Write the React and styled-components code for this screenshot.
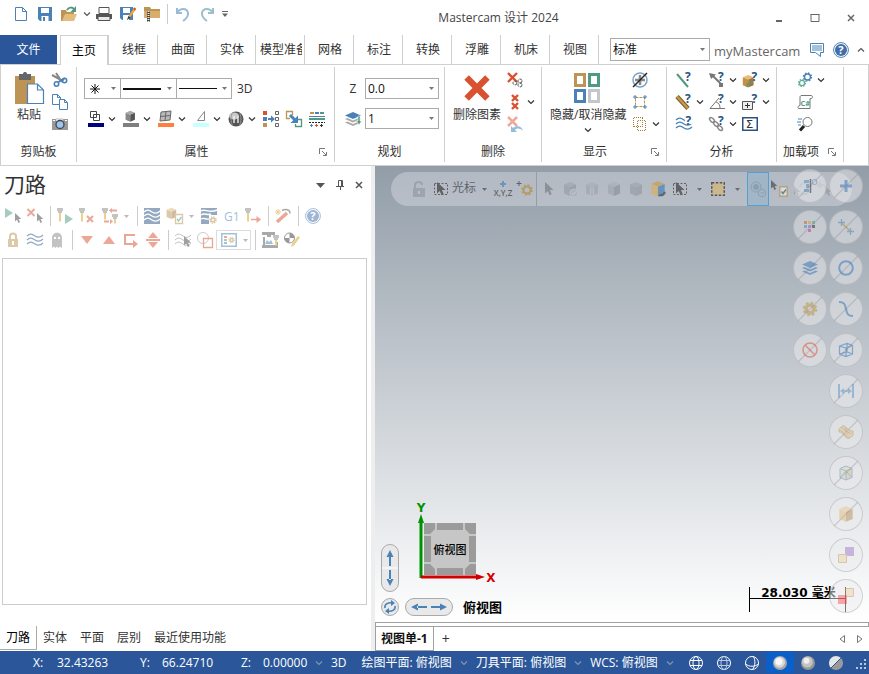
import React, { useState } from "react";
import styled, { createGlobalStyle, css } from "styled-components";

const GlobalStyle = createGlobalStyle`
  * {
    box-sizing: border-box;
  }

  body {
    margin: 0;
    background: #fff;
    color: #333;
    font-family: "Open Sans", "Noto Sans CJK SC", sans-serif;
    font-size: 12px;
    line-height: 16px;
  }

  button,
  select {
    font: inherit;
    color: inherit;
    border: 0;
    padding: 0;
    margin: 0;
    background: transparent;
  }
`;

const BLUE = "#4a82b8";
const NAVY = "#2b5580";
const RED = "#d9512f";
const GOLD = "#bd9454";
const GREEN = "#4f9a80";
const GREY = "#777";

// ---------- Drawing helpers ----------

const Gear = ({ cx, cy, r, color, width = 2 }) => {
  const dash = (Math.PI * r) / 8;
  return (
    <g fill="none" stroke={color}>
      <circle cx={cx} cy={cy} r={r} strokeWidth={width} strokeDasharray={`${dash} ${dash}`} />
      <circle cx={cx} cy={cy} r={r - width / 2 - 0.3} strokeWidth={width} />
    </g>
  );
};

const Cursor = ({ x, y, s = 1, color = "#444" }) => (
  <path
    transform={`translate(${x} ${y}) scale(${s})`}
    d="M0 0v9.5L2.3 7.4 3.8 11l1.8-.8L4.100 6.700h3z"
    fill={color}
  />
);

const Cube = ({ x = 0, y = 0, s = 1, top, left, right }) => (
  <g transform={`translate(${x} ${y}) scale(${s})`}>
    <path d="M8 1l6 2.500-6 2.500L2 3.500z" fill={top} />
    <path d="M2 3.500L8 6v9l-6-2.500z" fill={left} />
    <path d="M14 3.500L8 6v9l6-2.500z" fill={right} />
  </g>
);

const Mill = ({ x = 0, y = 0, h = 14 }) => (
  <g transform={`translate(${x} ${y})`}>
    <path d="M0 0h6v3H5v2H1V3H0z" fill="#888" />
    <path d={`M2 5h2v${h - 6}l-1 1-1-1z`} fill="#d9a520" />
  </g>
);

const Question = ({ x = 9, y = 9 }) => (
  <text x={x} y={y} fontSize="12" fontWeight="700" fill={NAVY} fontFamily="Open Sans">
    ?
  </text>
);

const Cross = ({ x, y, s, w = 2, color = RED }) => (
  <path d={`M${x} ${y}l${s} ${s}m0 ${-s}l${-s} ${s}`} stroke={color} strokeWidth={w} fill="none" />
);

const Waves = ({ color, w = 1.2 }) => (
  <path
    d="M0 4c3-3 5-2 8 0s5 2 8-1M0 8c3-3 5-2 8 0s5 2 8-1M0 12c3-3 5-2 8 0s5 2 8-1"
    stroke={color}
    strokeWidth={w}
    fill="none"
  />
);

const Layers = ({ top, rest }) => (
  <g>
    <path d="M8 1l8 3.500L8 8 0 4.500z" fill={top} />
    <path d="M0 8l2.500-1L8 9.500 13.500 7 16 8l-8 3.500z" fill={rest} />
    <path d="M0 11.500l2.500-1L8 13l5.500-2.500 2.500 1L8 15z" fill={rest} />
  </g>
);

const MiniText = ({ x, y, size, color = "#333", weight = 400, children }) => (
  <text x={x} y={y} fontSize={size} fontWeight={weight} fill={color} fontFamily="Open Sans">
    {children}
  </text>
);

const swatchBar = (color) => <path d="M0 12h16v4H0z" fill={color} stroke="none" />;

// ---------- Icons, all on a 16 x 16 grid ----------

const ICONS = {
  newFile: <path d="M2.500 1.500h7l4 4v9h-11zM9.500 1.500v4h4" fill="#fff" stroke={BLUE} />,
  save: (
    <g>
      <path d="M1 1h14v14H3l-2-2z" fill={BLUE} />
      <path d="M4 2h8v5H4zM4.500 10h7v5h-7z" fill="#fff" />
      <path d="M6 11h2v4H6z" fill={BLUE} />
    </g>
  ),
  open: (
    <g>
      <path d="M0 4h5l1 2h7v3H5l-3 6H0z" fill={GOLD} />
      <path d="M4 8h12l-3 7H1z" fill="#e3bd7d" />
      <path d="M6 4c2-3 5-3 7-1" stroke={GREEN} strokeWidth="2" fill="none" />
      <path d="M15 0v6H9.500z" fill={GREEN} />
    </g>
  ),
  print: (
    <g>
      <path d="M3 1.500h10v6H3z" fill="#fff" stroke="#555" />
      <path d="M0 8h16v5H0z" fill="#555" />
      <path d="M2 10.500h12v4H2z" fill="#e8e8e8" stroke="#555" />
    </g>
  ),
  saveAs: (
    <g>
      <path d="M0 1h13v13H2l-2-2z" fill={BLUE} />
      <path d="M3 2h7v5H3zM3 9h6v5H3z" fill="#fff" />
      <path d="M7 14l1.500-4L14 2l2 1.500-6 8z" fill="#f0a83c" />
      <path d="M7 14l1.500-4 2 1.500z" fill="#333" />
      <path d="M13 3l1.200-1.800 2 1.500L15 4.500z" fill={RED} />
    </g>
  ),
  zip: (
    <g>
      <path d="M0 1h6l1 2h9v9H0z" fill={GOLD} />
      <path d="M0 5h16v7H0z" fill="#d9ae6a" />
      <path d="M4.500 5v11" stroke="#444" strokeWidth="3" />
      <path d="M4.500 5v11" stroke="#eee" strokeWidth="2" strokeDasharray="1 1" />
    </g>
  ),
  undo: <path d="M2 2v5h5M2.500 6.500C5 2 12 1.500 13 7c.4 3-2 6-5 8" stroke="#9bbad9" strokeWidth="2" fill="none" />,
  redo: <path d="M14 2v5H9M13.500 6.500C11 2 4 1.500 3 7c-.4 3 2 6 5 8" stroke="#9bc0cc" strokeWidth="2" fill="none" />,
  comment: (
    <g fill="none" stroke={BLUE}>
      <path d="M1.500 1.500h13v9h-3v4l-5-4h-5z" fill="#fff" />
      <path d="M3 4h10M3 6h10M3 8h10" />
    </g>
  ),
  help: (
    <g>
      <circle cx="8" cy="8" r="7.400" fill="#fff" stroke={BLUE} />
      <circle cx="8" cy="8" r="6" fill="#426da8" />
      <text x="5.200" y="12" fontSize="11" fontWeight="700" fill="#fff" fontFamily="Open Sans">
        ?
      </text>
    </g>
  ),
  paste: (
    <g>
      <path d="M1 2h10v14H1z" fill={GOLD} />
      <path d="M3 1h2c0-1.300 2-1.300 2 0h2v3H3z" fill="#666" />
      <path d="M7.250 6h5l3 3v6.750h-8zM12.250 6v3h3" fill="#fff" stroke={BLUE} strokeWidth=".6" />
    </g>
  ),
  cut: (
    <g fill="none" strokeWidth="1.600">
      <path d="M4 1l6 9M0 3l11 6" stroke="#888" strokeWidth="2" />
      <path d="M10 9l3-3" stroke={BLUE} />
      <circle cx="4.500" cy="12" r="2.200" stroke={BLUE} />
      <circle cx="12.500" cy="8.500" r="2.200" stroke={BLUE} />
      <path d="M6 10.500l4-3" stroke={BLUE} />
    </g>
  ),
  copy: (
    <g fill="#fff" stroke={BLUE}>
      <path d="M.5.5h5l3 3v7h-8zM5.500.5v3h3" />
      <path d="M7.500 5.500h5l3 3v7h-8zM12.500 5.500v3h3" />
    </g>
  ),
  camera: (
    <g>
      <path d="M0 3h16v11H0z" fill="#999" />
      <path d="M4 2h7v3H4z" fill="#ddd" />
      <path d="M1 4h2v1H1zM13 4h2v1h-2z" fill="#fff" />
      <circle cx="8" cy="8.500" r="4" fill="#9cc6ec" stroke="#445" strokeWidth="1.300" />
    </g>
  ),
  pointStyle: <path d="M8 3v10M3 8h10M4.500 4.500l7 7M11.500 4.500l-7 7" stroke="#111" />,
  lineColor: (
    <g fill="none" stroke="#444">
      <path d="M2.500.5h6v6h-6zM5.500 3.500h6v6h-6z" />
      {swatchBar("#00007f")}
    </g>
  ),
  solidColor: (
    <g>
      <Cube x={1} y={-1} s={0.78} top="#aaa" left="#888" right="#555" />
      {swatchBar("#7f7f7f")}
    </g>
  ),
  surfaceColor: (
    <g>
      <path d="M3 1l10-1-1 9-10 1z" fill="#bbb" stroke="#666" />
      <path d="M8 .5L7 9.500M2.500 5.500l10-1" stroke="#666" />
      {swatchBar("#ff7f3f")}
    </g>
  ),
  wireColor: (
    <g>
      <path d="M11.500.5v9h-7z" fill="none" stroke="#888" />
      {swatchBar("#c8ffff")}
    </g>
  ),
  globe: (
    <g>
      <circle cx="8" cy="8" r="7.500" fill="#555" />
      <ellipse cx="6" cy="5" rx="5" ry="3.500" fill="#c9c9c9" />
      <path d="M4.500 1.500c-2 4-2 9 0 13M11.500 1.500c2 4 2 9 0 13" stroke="#999" fill="none" />
      <path d="M5 5h2v7H5zM9 5h2v7H9z" fill="#eee" opacity=".7" />
    </g>
  ),
  setAll: (
    <g>
      <path d="M0 0h4v4H0z" fill={RED} />
      <path d="M0 6h4v4H0zM5 7h3V4.500L12 8l-4 3.500V9H5z" fill={BLUE} />
      <path d="M0 12h4v4H0z" fill={GOLD} />
      <path d="M12.500.5h3v3h-3zM12.500 6.500h3v3h-3zM12.500 12.500h3v3h-3z" fill="none" stroke="#666" />
    </g>
  ),
  setFrom: (
    <g fill="none">
      <path d="M4 7.500H.5v-7h6V4" stroke={GOLD} strokeWidth="1.300" />
      <path d="M12 8.500h3.500v7h-6V13" stroke={GREEN} strokeWidth="1.300" />
      <path d="M4 4l5 5" stroke={BLUE} strokeWidth="3" />
      <path d="M12 4.500V12H4.500z" fill={BLUE} />
    </g>
  ),
  lineTypes: (
    <g>
      <path d="M1 2h4" stroke={GOLD} strokeWidth="2" />
      <path d="M6 2h4" stroke={BLUE} strokeWidth="2" />
      <path d="M11 2h4" stroke={GREEN} strokeWidth="2" />
      <path d="M0 5.500h16" stroke={BLUE} />
      <path d="M0 8h16" stroke={GREEN} strokeWidth="2" />
      <path d="M0 11.500h16" stroke="#222" strokeDasharray="2 1" />
      <path d="M1 14.500h3M2.500 13v3" stroke={BLUE} />
      <path d="M6 14.500h3M7.500 13v3" stroke={RED} />
      <path d="M11 14.500h3M12.500 13v3" stroke="#333" />
    </g>
  ),
  levels: (
    <g>
      <Layers top={BLUE} rest="#aaa" />
      <path d="M13 5h2v5h1.500L14 14l-2.500-4H13z" fill={GREEN} stroke="#fff" strokeWidth=".5" />
    </g>
  ),
  bigDelete: <path d="M2.800 2.800l10.400 10.400M13.200 2.800L2.800 13.200" stroke={RED} strokeWidth="3.200" />,
  deleteLink: (
    <g fill="none">
      <Cross x={1} y={1} s={9} w={2.400} />
      <circle cx="8" cy="11" r="2" stroke="#555" strokeDasharray="3 1" />
      <circle cx="13" cy="13" r="2" stroke="#555" strokeDasharray="3 1" />
      <circle cx="13" cy="9" r="2" stroke="#555" strokeDasharray="3 1" />
    </g>
  ),
  deleteDup: (
    <g>
      <Cross x={5} y={1} s={6} w={2.400} />
      <Cross x={5} y={9} s={6} w={2.400} />
    </g>
  ),
  undelete: (
    <g>
      <Cross x={1} y={1} s={9} w={2.600} color="#f0a999" />
      <path d="M4 10v6h6L8 14c2-2 5-2 8 1-1-5-6-6-10-3z" fill="#94bddb" />
    </g>
  ),
  hideShow: (
    <g fill="#fff" strokeWidth="1.500">
      <path d="M1.750 1.250h4.500v5.500h-4.500z" stroke={GOLD} />
      <path d="M8.750 1.250h4.500v5.500h-4.500z" stroke={GREEN} />
      <path d="M1.750 9.250h4.500v5.500h-4.500z" stroke={BLUE} />
      <path d="M8.750 9.250h4.500v5.500h-4.500z" stroke="#c3c7cc" />
    </g>
  ),
  noPoints: (
    <g fill="none">
      <circle cx="8" cy="8" r="7" stroke="#7aa3c6" strokeWidth="1.500" />
      <path d="M8 3v10M3 8h10" stroke="#888" strokeWidth="2.500" />
      <path d="M1 15L15 1" stroke="#222" strokeWidth="1.400" />
    </g>
  ),
  endpoints: (
    <g fill="none">
      <path d="M3.500 3.500h9v9h-9z" stroke={GOLD} strokeDasharray="3 1" />
      <path d="M3 1v4M1 3h4M13 1v4M11 3h4M3 11v4M1 13h4M13 11v4M11 13h4" stroke={BLUE} />
    </g>
  ),
  hideBox: (
    <g fill="none" stroke="#a87b30" strokeDasharray="1 1" shapeRendering="crispEdges">
      <path d="M1.500 1.500h9M1.500 10.500h9M1.500 1.500v9M10.500 1.500v9" />
      <path d="M5.500 4.500h8M5.500 14.500h8M5.500 4.500v10M13.500 4.500v10" />
    </g>
  ),
  anEntity: (
    <g>
      <path d="M1 2l11 13" stroke={GREEN} strokeWidth="2" />
      <Question />
    </g>
  ),
  anDistance: (
    <g>
      <path d="M1 2.500l11 12" stroke="#7a5a28" strokeWidth="4.500" />
      <path d="M1 2.500l11 12" stroke="#c49a50" strokeWidth="2.500" />
      <Question />
    </g>
  ),
  anArea: (
    <g>
      <Waves color={BLUE} w={1.300} />
      <path d="M9 0h7v8H9z" fill="#fff" />
      <Question x={9.500} />
    </g>
  ),
  anDynamic: (
    <g>
      <path d="M3 3l10 10" stroke={GREY} strokeWidth="2" />
      <path d="M0 1l7 1.500L2 7z" fill={GREY} />
      <path d="M10 11h4v4h-4z" fill={GREY} />
      <Question />
    </g>
  ),
  anAngle: (
    <g fill="none" stroke={GREY}>
      <path d="M10 4L1 14.500h15M7 8c3 1 4 3 4 6" />
      <g stroke="none">
        <Question />
      </g>
    </g>
  ),
  anChain: (
    <g>
      <g fill="none" stroke="#888" strokeWidth="1.500">
        <ellipse cx="3" cy="4" rx="3" ry="1.700" transform="rotate(45 3 4)" />
        <ellipse cx="7" cy="8" rx="3" ry="1.700" transform="rotate(45 7 8)" />
        <ellipse cx="11" cy="12" rx="3" ry="1.700" transform="rotate(45 11 12)" />
      </g>
      <Question />
    </g>
  ),
  anSolid: (
    <g>
      <Cube x={-1} y={2} s={0.9} top="#e7bd77" left="#c98f40" right="#a9763a" />
      <path d="M5 15c0-4 3-5 6-5" stroke={GREEN} fill="none" strokeWidth="1.500" />
      <Question x={9.500} />
    </g>
  ),
  anAdd: (
    <g>
      <path d="M.5 7.500h10v8H.5z" fill="#eee" stroke="#555" />
      <path d="M5.500 9v5M3 11.500h5" stroke="#333" />
      <Question x={9.500} />
    </g>
  ),
  anSum: (
    <g>
      <path d="M.75 1.750h14.500v12.500H.75z" fill="#fff" stroke={NAVY} strokeWidth="1.500" />
      <MiniText x="4.500" y="12" size="11" weight="600">
        Σ
      </MiniText>
    </g>
  ),
  gears: (
    <g>
      <Gear cx={10.5} cy={5} r={4} color={BLUE} width={1.400} />
      <Gear cx={5} cy={11} r={3.500} color="#5fae96" width={1.300} />
    </g>
  ),
  script: (
    <g>
      <path d="M4 1.500h10c2 0 2 3 0 3h-1v10H2c-2 0-1-3 1-3V3c0-1 1-1.500 2-1.500" fill="#fff" stroke={GREY} />
      <MiniText x="3.500" y="11.500" size="7.500" color={GREEN} weight="700">
        C#
      </MiniText>
    </g>
  ),
  search: (
    <g fill="none">
      <path d="M1 3h4M0 6h4M1 9h3" stroke={BLUE} />
      <circle cx="10.500" cy="6" r="4.500" stroke="#777" />
      <path d="M7 10l-4 4.500" stroke="#222" strokeWidth="3" />
    </g>
  ),
  selAll: (
    <g>
      <path d="M0 0l8 5-8 5z" fill={GREEN} />
      <Cursor x={10} y={5} s={0.9} />
    </g>
  ),
  selNone: (
    <g>
      <Cross x={0.5} y={1} s={7} w={1.800} />
      <Cursor x={10} y={5} s={0.9} />
    </g>
  ),
  regenAll: (
    <g>
      <Mill x={0} y={0} />
      <path d="M8 6l8 5-8 5z" fill={GREEN} />
    </g>
  ),
  regenBad: (
    <g>
      <Mill x={0} y={0} />
      <Cross x={8} y={8} s={6} />
    </g>
  ),
  transformOp: (
    <g>
      <Mill x={0} y={0} h={12} />
      <Mill x={10} y={6} h={10} />
      <path d="M8 2.500h7M2 13.500h5" stroke={RED} strokeWidth="2" />
      <path d="M7 2.500L10 0v5zM11 13.500L8 11v5z" fill={RED} />
    </g>
  ),
  backplot: (
    <g>
      <path d="M0 0h16v16H0z" fill={NAVY} />
      <Waves color="#fff" w={1.300} />
    </g>
  ),
  verify: (
    <g>
      <Cube x={-2} y={-1} s={0.8} top="#e0b878" left={GOLD} right="#a07c44" />
      <path d="M8.500 6.500h7v9h-7z" fill="#fff" stroke={GOLD} strokeWidth="1.300" />
      <path d="M10 11l1.500 2 3-4" fill="none" stroke={GREEN} strokeWidth="1.500" />
    </g>
  ),
  simulate: (
    <g>
      <path d="M0 0h16v7H8v9H0z" fill={NAVY} />
      <path d="M0 3c4-3 8 3 16-1M0 7c4-3 6 1 10-1M0 11c3-2 5 1 8 0" stroke="#fff" fill="none" strokeWidth="1.400" />
      <Gear cx={12} cy={12} r={3} color={GOLD} width={1.600} />
    </g>
  ),
  g1: (
    <MiniText x="1" y="12.500" size="12" color={BLUE}>
      G1
    </MiniText>
  ),
  highfeed: (
    <g>
      <Mill x={0} y={0} />
      <path d="M6 11.500h6" stroke={RED} strokeWidth="1.500" />
      <path d="M16 11.500L11.500 8v7z" fill={RED} />
    </g>
  ),
  wand: (
    <g>
      <path d="M2 14L12 5" stroke={RED} strokeWidth="3.500" />
      <path d="M7 2.500c4-2 8-1 8 3" stroke="#555" fill="none" strokeWidth="1.500" />
      <path d="M3 1v6M0 4h6M1 2l4 4M5 2L1 6" stroke="#e0a030" />
    </g>
  ),
  lock: (
    <g>
      <path d="M3 7h10v8H3z" fill={GOLD} />
      <path d="M5 7V4c0-3.500 6-3.500 6 0v3" fill="none" stroke={GOLD} strokeWidth="2" />
      <path d="M8 9v4" stroke="#fff" strokeWidth="2" />
    </g>
  ),
  waves: <Waves color={NAVY} />,
  ghost: (
    <g>
      <path d="M3 16V6c0-7 10-7 10 0v10l-2-1.500L9.500 16 8 14.500 6.500 16 5 14.500z" fill="#888" />
      <path d="M5 5h2v2H5zM9 5h2v2H9z" fill="#fff" />
    </g>
  ),
  down: <path d="M2 4h12L8 12z" fill={RED} />,
  up: <path d="M2 12h12L8 4z" fill={RED} />,
  insertArrow: (
    <g>
      <path d="M12 3H2v9h9" stroke={RED} strokeWidth="2" fill="none" />
      <path d="M10 8l5 4-5 4z" fill={RED} />
    </g>
  ),
  scroll: <path d="M1 7h14v2H1zM3 6l5-6 5 6zM3 10l5 6 5-6z" fill={RED} />,
  pickPath: (
    <g>
      <Waves color="#888" w={1} />
      <Cursor x={9} y={4} />
    </g>
  ),
  overlap: (
    <g fill="none">
      <circle cx="6" cy="6" r="5.500" stroke="#999" />
      <path d="M6.500 6.500h9v9h-9z" stroke={RED} strokeWidth="1.300" />
    </g>
  ),
  display: (
    <g>
      <path d="M.75 1.750h14.500v12.500H.75z" fill="#fff" stroke={BLUE} strokeWidth="1.500" />
      <path d="M3 4h3v2H3z" fill={RED} />
      <path d="M3 7h3v2H3z" fill={GREEN} />
      <path d="M3 10h3v2H3z" fill={BLUE} />
      <Gear cx={10.500} cy={8} r={2.500} color={GOLD} width={1.400} />
    </g>
  ),
  machine: (
    <g>
      <path d="M0 0h13v3H9v2H5V3H0zM1 5h2v8h10v-3h3v6H0v-3h1z" fill="#555" />
      <path d="M3 12l2-4 2 2 2-2 2 4z" fill={BLUE} />
      <Mill x={11} y={3} h={11} />
    </g>
  ),
  editTool: (
    <g>
      <circle cx="5.500" cy="6" r="5" fill="#fff" stroke="#333" />
      <path d="M5.500 6V1a5 5 0 015 5zM5.500 6v5a5 5 0 01-5-5z" fill="#333" />
      <path d="M7 15l1-3.500L14 4l2 1.500-6 8z" fill="#d9a520" />
    </g>
  ),
  unlock: (
    <g fill="#6f7882">
      <path d="M2 7h12v9H2z" />
      <path d="M4 7V4c0-4 7-4 7 0" fill="none" stroke="#6f7882" strokeWidth="2" />
      <path d="M7 10h2v3H7z" fill="#c5cad0" />
    </g>
  ),
  boxCursor: (
    <g>
      <path d="M1.500 2.500h13v11h-13z" fill="none" stroke="#333" strokeDasharray="2 1.500" />
      <Cursor x={4} y={1} s={1.200} color="#333" />
    </g>
  ),
  xyz: (
    <g>
      <path d="M8 0v6M5 3h6" stroke={BLUE} strokeWidth="2" />
      <text x="8" y="15" fontSize="8" fill="#333" textAnchor="middle" fontFamily="Open Sans" fontWeight="600">
        X,Y,Z
      </text>
    </g>
  ),
  plusGear: (
    <g>
      <path d="M2 0v5M-.5 2.500h5" stroke="#333" />
      <Gear cx={10} cy={9} r={4.800} color="#b58a30" width={2} />
    </g>
  ),
  cursor: <Cursor x={5} y={1} s={1.200} />,
  cubeCheck: (
    <g>
      <Cube top="#8c939b" left="#7b838c" right="#6c747d" />
      <circle cx="12" cy="12" r="4" fill="#9aa2aa" stroke="#c4c9ce" />
      <path d="M10 12l1.500 1.500L14 10.500" stroke="#e5e8ea" fill="none" />
    </g>
  ),
  cubeEdge: (
    <g>
      <Cube top="#9da3aa" left="#8a9199" right="#8a9199" />
      <path d="M8 6v9" stroke="#e5e8ea" strokeWidth="3" />
      <path d="M8 6v9" stroke="#555" />
    </g>
  ),
  cubeFace: <Cube top="#9da3aa" left="#8a9199" right="#5f676f" />,
  cubeBody: <Cube top="#8c939b" left="#7b838c" right="#747c85" />,
  cubeColor: (
    <g>
      <Cube x={-1} y={-1} s={1.120} top="#c79a50" left="#dcae5c" right="#3d7eb8" />
      <path d="M9 14c3 1 5-1 6-3" stroke="#333" fill="none" strokeWidth="2" />
    </g>
  ),
  region: <path d="M1.750 1.750h12.500v12.500H1.750z" fill="#d8b672" stroke="#222" strokeWidth="1.500" strokeDasharray="2.500 1.500" />,
  target: (
    <g fill="none" stroke="#68788a">
      <circle cx="6" cy="6" r="5" />
      <circle cx="6" cy="6" r="2.500" fill="#68788a" />
      <circle cx="12" cy="12" r="3.800" fill="#9fb4c7" />
      <path d="M10.500 11l1.500 1.500 2-1.500" />
    </g>
  ),
  validate: (
    <g>
      <Cursor x={-1} y={-1} s={0.900} />
      <path d="M7.750 5.750h7.500v9.500h-7.500z" fill="#eee" stroke={GOLD} strokeWidth="1.500" />
      <path d="M9.500 10.500l1.500 2 3-4" stroke="#277" fill="none" strokeWidth="1.500" />
    </g>
  ),
  cycle: (
    <g>
      <Cursor x={0} y={5} s={0.900} />
      <path d="M6 6c1-5 8-5 9 0M15 9c-1 5-6 5-8 3" stroke={GREEN} fill="none" strokeWidth="1.600" />
    </g>
  ),
  undoSelect: (
    <g opacity=".6">
      <path d="M0 4l5-4v3c5 0 6 3 6 5-2-3-3-3-6-3v3z" fill="#666" />
      <Cursor x={9} y={5} s={0.900} />
    </g>
  ),
  qmPicker: (
    <g>
      <path d="M2 2h5v3H2zM4 6h3v4H4zM2 11h5v3H2z" fill={BLUE} />
      <path d="M8.500 1v14" stroke="#222" strokeWidth="1.500" />
      <circle cx="12.500" cy="4" r="2.500" fill="none" stroke={BLUE} />
    </g>
  ),
  qmPlus: <path d="M6.500 2h3v4.500H14v3H9.500V14h-3V9.500H2v-3h4.500z" fill="#2f6fb5" />,
  qmColors: (
    <g>
      <path d="M2 2h3v3H2z" fill={RED} />
      <path d="M6 2h3v3H6z" fill="#c8a020" />
      <path d="M10 2h3v3h-3z" fill={GREEN} />
      <path d="M2 6h3v3H2z" fill={BLUE} />
      <path d="M6 6h3v3H6z" fill="#86c" />
      <path d="M10 6h3v3h-3z" fill="#222" />
      <path d="M2 10h3v3H2z" fill="#bbb" />
      <path d="M6 10h3v3H6z" fill="#d02a90" />
    </g>
  ),
  qmLine: (
    <g>
      <path d="M3.500 3.500l9 9" stroke="#a88820" strokeWidth="1.500" />
      <path d="M3.500 0v7M0 3.500h7M12.500 9v7M9 12.500h7" stroke={BLUE} strokeWidth="1.300" />
    </g>
  ),
  qmLayers: <Layers top="#2f6fb5" rest="#2f6fb5" />,
  qmCircle: <circle cx="8" cy="8" r="6.800" fill="none" stroke="#2f6fb5" strokeWidth="2" />,
  qmGear: (
    <g fill="none" stroke="#b8923c">
      <circle cx="8" cy="8" r="4" strokeWidth="3.500" />
      <circle cx="8" cy="8" r="6.200" strokeWidth="2.200" strokeDasharray="2.600 2.270" />
    </g>
  ),
  qmCurve: <path d="M1 1c5 0 6 2 7 7s2 7 7 7" fill="none" stroke="#2f6fb5" strokeWidth="2" />,
  qmBlank: (
    <g fill="none" stroke={RED} strokeWidth="1.500">
      <circle cx="8" cy="8" r="7" />
      <path d="M3 3l10 10" />
    </g>
  ),
  qmWire: (
    <g fill="none" stroke="#2f6fb5" strokeWidth="1.200">
      <path d="M1.500 4L9 1.500l5.500 2V12L8 14.500 1.500 12zM1.500 4L8 6l6.500-2.500M8 6v8.500M1.500 12L9 10l5.500 2M9 1.500V10" />
    </g>
  ),
  qmDim: (
    <g>
      <path d="M1 1v14M15 1v14" stroke="#3c7ec0" strokeWidth="2" />
      <path d="M4 8h8" stroke="#3c7ec0" strokeWidth="1.500" />
      <path d="M2 8l4-3v6zM14 8l-4-3v6z" fill="#3c7ec0" />
    </g>
  ),
  qmSurface: (
    <g stroke="#a8823c" strokeWidth=".9">
      <path d="M1 5l4-3.500c3 0 4 5.500 10 5.500v4.500l-4 3C6 14.500 6 8 1 8z" fill="#e0b878" />
      <path d="M1 6.500c5 0 5 6.500 10 6.500M3 3.500c4 0 5 6 10 6M8 4v4M5.500 7l3-4M8 11l4-4" fill="none" />
    </g>
  ),
  qmMesh: (
    <g>
      <Cube top="#e8d098" left="#e8d098" right="#d8b878" />
      <path d="M2 3.500L8 1l6 2.500v9L8 15l-6-2.500zM2 3.500L8 6l6-2.500M8 6v9M2 12.500L8 6l6 6.500" fill="none" stroke="#3c7ec0" />
    </g>
  ),
  qmSolid: <Cube x={-1} y={-1} s={1.120} top="#e6c080" left="#e0b060" right="#a87838" />,
  qmResult: (
    <g>
      <path d="M7 0h9v9H7z" fill="#8a62c0" />
      <path d="M.5 7.500h8v8h-8z" fill="#eccf9a" stroke="#b88a48" />
    </g>
  ),
  qmGroup: (
    <g>
      <path d="M7.500.5h8v8h-8z" fill="#eccf9a" stroke="#b88a48" />
      <path d="M0 7h9v9H0z" fill="#f33" />
    </g>
  ),
  wireSphere: (
    <g fill="none" stroke="#fff">
      <circle cx="8" cy="8" r="6.500" />
      <ellipse cx="8" cy="8" rx="3" ry="6.500" />
      <path d="M2 5.500h12M2 10.500h12" />
    </g>
  ),
  dimSphere: (
    <g fill="none" stroke="#fff">
      <circle cx="8" cy="8" r="6.500" />
      <ellipse cx="8" cy="8" rx="3" ry="6.500" stroke="#b9c8e0" />
      <path d="M2 5.500h12M2 10.500h12" stroke="#b9c8e0" />
    </g>
  ),
  edgeSphere: (
    <g fill="none" stroke="#fff">
      <circle cx="8" cy="8" r="6.500" />
      <path d="M9.500 1.500c2 4 2 9-1 13M1.500 9c4 3 9 3 13 0" />
    </g>
  ),
  litSphere: (
    <g>
      <circle cx="8" cy="8" r="7" fill="#a7a7a7" />
      <circle cx="7.500" cy="7.200" r="5.500" fill="#d8d8d8" />
      <circle cx="7" cy="6.500" r="3.500" fill="#f8f8f8" />
    </g>
  ),
  softSphere: (
    <g>
      <circle cx="8" cy="8" r="7" fill="#979797" />
      <circle cx="7.300" cy="7" r="5.500" fill="#c4c4c4" />
      <circle cx="6.500" cy="5.800" r="3" fill="#eee" />
    </g>
  ),
  halfSphere: (
    <g>
      <path d="M3 13A7 7 0 0113 3z" fill="#e6e6e6" />
      <path d="M3 13A7 7 0 0013 3z" fill="#9a9a9a" />
      <path d="M3 13L13 3" stroke="#2b579a" />
    </g>
  ),
};

const Svg = styled.svg`
  display: block;
  flex: none;
`;

const Icon = ({ name, size = 16 }) => (
  <Svg width={size} height={size} viewBox="0 0 16 16" aria-hidden="true" overflow="visible">
    {ICONS[name]}
  </Svg>
);

const Chevron = ({ up }) => (
  <Svg width="8" height="8" viewBox="0 0 8 8" aria-hidden="true">
    <path d={up ? "M1 5.500l3-3 3 3" : "M1 2.500l3 3 3-3"} fill="none" stroke="currentColor" strokeWidth="1.200" />
  </Svg>
);

const CaretSvg = styled(Svg)`
  color: ${(props) => props.color || "#777"};
`;

const Caret = ({ wide, color }) => (
  <CaretSvg width={wide ? 9 : 5} height={wide ? 5 : 3} viewBox="0 0 9 5" color={color} aria-hidden="true">
    <path d="M0 0h9L4.500 5z" fill="currentColor" />
  </CaretSvg>
);

// ---------- Shell ----------

const Window = styled.div`
  display: flex;
  flex-direction: column;
  min-height: 100vh;
  overflow: hidden;
`;

const TitleBar = styled.header`
  display: grid;
  grid-template-columns: auto 1fr auto;
  align-items: center;
  height: 35px;
`;

const QuickAccess = styled.div`
  display: flex;
  align-items: center;
  height: 28px;
  align-self: start;
  padding: 0 6px 0 9px;
  color: #555;
`;

const QuickButton = styled.button`
  display: flex;
  align-items: center;
  justify-content: center;
  width: ${(props) => (props.$narrow ? "11px" : "24px")};
  height: 24px;
`;

const QuickDivider = styled.span`
  width: 1px;
  height: 20px;
  margin: 0 3px;
  background: #ccc;
`;

const AppTitle = styled.h1`
  margin: 0;
  font-size: 12px;
  font-weight: 400;
  line-height: 32px;
  text-align: center;
  color: #444;
`;

const WindowButtons = styled.div`
  display: flex;
  justify-content: flex-end;
`;

const WindowButton = styled.button`
  display: flex;
  align-items: center;
  justify-content: center;
  width: 36px;
  height: 32px;
`;

const TabBar = styled.nav`
  display: flex;
  height: 30px;
  border-bottom: 1px solid #d0d0d0;
`;

const FileTab = styled.button`
  flex: none;
  width: 57px;
  height: 29px;
  margin-right: 3px;
  background: #2b579a;
  color: #fff;
`;

const Tab = styled.button`
  flex: none;
  width: 49px;
  height: 29px;
  padding: 0 2px 0 4px;
  white-space: nowrap;
  border-right: 1px solid #d0d0d0;

  ${(props) =>
    props.$active &&
    css`
      height: 30px;
      padding: 0 2px;
      background: #fff;
      color: #000;
      border-top: 1px solid #d0d0d0;
      border-left: 1px solid #d0d0d0;
      border-right: 2px solid #d0d0d0;
    `}
`;

const TabLabel = styled.span`
  display: block;
  overflow: hidden;
  text-align: ${(props) => (props.$long ? "left" : "center")};
`;

const TabTools = styled.div`
  display: flex;
  align-items: center;
  padding-left: 11px;
  color: #555;
`;

const AccountLink = styled.a`
  color: #666;
  font-size: 13px;
  line-height: 24px;
  padding: 2px 5px 0 4px;
  text-decoration: none;
`;

const ToolButton = styled.button`
  display: flex;
  align-items: center;
  justify-content: center;
  flex: none;
  width: ${(props) => (props.$narrow ? "16px" : "24px")};
  height: 24px;
`;

// ---------- Combo box ----------

const ComboBox = styled.div`
  display: grid;
  align-items: center;
  flex: none;
  width: ${(props) => props.$width}px;
  height: ${(props) => (props.$tall ? "23px" : "21px")};
  border: 1px solid #ababab;
  background: #fff;

  & + & {
    margin-left: -1px;
  }

  > * {
    grid-area: 1 / 1;
  }
`;

const ComboSelect = styled.select`
  appearance: none;
  width: 100%;
  height: 100%;
  padding: 0 0 0 2px;
  color: #111;
`;

const ComboArrow = styled.span`
  justify-self: end;
  margin-right: 4px;
  pointer-events: none;
`;

const ComboDrawing = styled.span`
  padding-left: 2px;
  pointer-events: none;
`;

const Combo = ({ label, width, tall, options = [""], children }) => (
  <ComboBox $width={width} $tall={tall}>
    <ComboSelect aria-label={label}>
      {options.map((option) => (
        <option key={option}>{option}</option>
      ))}
    </ComboSelect>
    {children && <ComboDrawing>{children}</ComboDrawing>}
    <ComboArrow>
      <Caret />
    </ComboArrow>
  </ComboBox>
);

// ---------- Ribbon ----------

const RibbonBar = styled.section`
  display: flex;
  padding: 2px 0 3px;
  border: 1px solid #d0d0d0;
  border-top: 0;
`;

const GroupBox = styled.div`
  display: flex;
  flex-direction: column;
  flex: none;
  width: ${(props) => props.$width}px;
  height: 95px;
  border-right: 1px solid #d0d0d0;
`;

const GroupBody = styled.div`
  display: flex;
  flex: 1;
  gap: 6px;
  padding-left: ${(props) => props.$inset}px;
`;

const GroupFooter = styled.div`
  display: flex;
  align-items: center;
  height: 20px;
  padding-bottom: 1px;
`;

const GroupName = styled.span`
  flex: 1;
  text-align: center;
`;

const Launcher = styled.button`
  width: 18px;
  height: 16px;
  padding-left: 3px;
`;

const Group = ({ name, width, inset, launcher, children }) => (
  <GroupBox $width={width}>
    <GroupBody $inset={inset}>{children}</GroupBody>
    <GroupFooter>
      <GroupName>{name}</GroupName>
      {launcher && (
        <Launcher aria-label={`${name} 设置`}>
          <Svg width="8" height="8" viewBox="0 0 8 8">
            <path d="M.5 6V.5H6" fill="none" stroke="#777" />
            <path d="M3 3l4 4M7.500 4v3.500H4" fill="none" stroke="#777" />
          </Svg>
        </Launcher>
      )}
    </GroupFooter>
  </GroupBox>
);

const BigButton = styled.button`
  display: flex;
  flex-direction: column;
  align-items: center;
  gap: 3px;
  min-width: 34px;
  padding-top: 5px;
  white-space: nowrap;
`;

const SmallGrid = styled.div`
  display: grid;
  grid-auto-flow: column;
  grid-template-rows: repeat(3, 22px);
  grid-auto-columns: ${(props) => (props.$wide ? "33px" : "28px")};
  align-content: start;
  padding-top: 2px;
`;

const DropButton = styled.button`
  display: flex;
  align-items: center;
  gap: 4px;
`;

const Drop = ({ icon, label, menu }) => (
  <DropButton aria-label={label}>
    <Icon name={icon} />
    {menu && <Chevron />}
  </DropButton>
);

const FieldRows = styled.div`
  display: flex;
  flex-direction: column;
  gap: 9px;
  padding-top: 11px;
`;

const FieldRow = styled.div`
  display: flex;
  align-items: center;
  height: 21px;
  gap: ${(props) => props.$gap || 0}px;
  padding-left: ${(props) => props.$inset || 0}px;
`;

const FieldLabel = styled.span`
  width: 16px;
  text-align: center;
`;

const DimToggle = styled.button`
  padding-left: 5px;
`;

// ---------- Work area ----------

const WorkArea = styled.main`
  display: flex;
  flex: 1;
`;

const Panel = styled.aside`
  display: flex;
  flex-direction: column;
  flex: none;
  width: 371px;
`;

const PanelHeader = styled.div`
  display: flex;
  align-items: center;
  height: 38px;
  padding: 0 3px 0 4px;
`;

const PanelTitle = styled.h2`
  flex: 1;
  margin: 0;
  padding-bottom: 3px;
  font-size: 21px;
  font-weight: 400;
  line-height: 32px;
`;

const PanelButton = styled.button`
  display: flex;
  align-items: center;
  justify-content: center;
  width: 19px;
  height: 20px;
`;

const PanelToolbar = styled.div`
  display: flex;
  align-items: center;
  height: 24px;
  padding-left: 2px;
`;

const PanelTool = styled.button`
  display: flex;
  align-items: center;
  gap: 6px;
  width: ${(props) => (props.$menu ? "35px" : "22px")};
  height: 20px;
  padding-left: ${(props) => (props.$menu ? "4px" : "3px")};
  border: ${(props) => (props.$framed ? "1px solid #ddd" : "0")};

  > svg {
    opacity: 0.5;
  }
`;

const PanelDivider = styled.span`
  width: 1px;
  height: 20px;
  margin: 0 3px 0 4px;
  background: #ccc;
`;

const OperationsTree = styled.div`
  flex: 1;
  margin: 6px 4px 21px 2px;
  border: 1px solid #ccc;
`;

const PanelTabs = styled.div`
  display: flex;
  height: 24px;
  margin-bottom: 1px;
`;

const PanelTab = styled.button`
  padding: 0 6px;
  border-right: 1px solid transparent;

  ${(props) =>
    props.$active &&
    css`
      color: #000;
      border: 1px solid #ababab;
      border-top: 0;
      border-left: 0;
    `}
`;

const Splitter = styled.div`
  flex: none;
  width: 4px;
  background: #eee;
`;

const ViewColumn = styled.div`
  display: flex;
  flex-direction: column;
  flex: 1;
  min-width: 0;
`;

const Viewport = styled.div`
  position: relative;
  flex: 1;
  overflow: hidden;
  background: linear-gradient(#929da8, #fff);
`;

const SelectionBar = styled.div`
  position: absolute;
  top: 6px;
  left: 16px;
  display: flex;
  align-items: center;
  height: 34px;
  padding: 0 17px;
  border-radius: 17px;
  background: rgba(225, 225, 230, 0.42);
`;

const SelectionTool = styled.button`
  display: flex;
  align-items: center;
  justify-content: center;
  width: ${(props) => (props.$caret ? "16px" : "22px")};
  height: 34px;

  > svg {
    opacity: ${(props) => (props.$dim ? 0.35 : 0.65)};
  }

  ${(props) =>
    props.$on &&
    css`
      margin-left: 2px;
      border: 1px solid #559fd2;
      background: rgba(140, 175, 200, 0.5);
    `}
`;

const SelectionLabel = styled.span`
  color: #5c646c;
  padding-bottom: 2px;
`;

const SelectionDivider = styled.span`
  width: 1px;
  height: 34px;
  background: #969da5;
`;

const QuickMasks = styled.div`
  position: absolute;
  top: 3px;
  right: 6px;
  display: flex;
  align-items: flex-start;
  gap: 2px;
`;

const MaskColumn = styled.div`
  display: flex;
  flex-direction: column;
  gap: 7px;
`;

const MaskButton = styled.button`
  display: grid;
  place-items: center;
  width: 34px;
  height: 34px;
  border: 1px solid rgba(150, 150, 155, 0.35);
  border-radius: 50%;
  background: ${(props) =>
    props.$split
      ? `linear-gradient(135deg, transparent 48%, rgba(130, 130, 135, 0.3) 49%,
        rgba(130, 130, 135, 0.3) 51%, transparent 52%), rgba(235, 235, 238, 0.5)`
      : "rgba(235, 235, 238, 0.5)"};

  > svg {
    opacity: ${(props) => (props.$faint ? 0.4 : 0.5)};
  }
`;

const Gnomon = styled.div`
  position: absolute;
  left: 6px;
  bottom: 6px;
  display: flex;
  flex-direction: column;
  gap: 6px;
`;

const GnomonRow = styled.div`
  display: flex;
  align-items: ${(props) => (props.$low ? "flex-end" : "center")};
  gap: 6px;
`;

const SpinButton = styled.button`
  width: ${(props) => (props.$wide ? "48px" : "18px")};
  height: ${(props) => (props.$tall ? "48px" : "18px")};
  border: 1px solid #aaa;
  border-radius: 9px;
  background: #e9e9ea;
`;

const ViewName = styled.strong`
  padding-left: 4px;
  color: #000;
  font-size: 13px;
  line-height: 18px;
`;

const ScaleRuler = styled.div`
  position: absolute;
  right: 23px;
  bottom: 10px;
  width: 97px;
  height: 25px;
  padding: 1px 0 0 2px;
  border: solid #000;
  border-width: 0 1px;
  background: linear-gradient(#000, #000) 0 11px / 100% 1px no-repeat;
  color: #000;
  font: bold 12px/10px "DejaVu Sans", "Noto Sans CJK SC", sans-serif;
  text-align: center;
  white-space: nowrap;
`;

const SheetRule = styled.div`
  height: 5px;
  border: 1px solid #a0a0a0;
`;

const SheetBar = styled.div`
  display: flex;
  align-items: center;
  height: 24px;
`;

const SheetTab = styled.button`
  height: 24px;
  padding: 0 5px;
  border: 1px solid #a0a0a0;
  border-top: 0;
  color: #111;
  font-weight: 700;
`;

const SheetButton = styled.button`
  display: flex;
  align-items: center;
  justify-content: center;
  width: ${(props) => (props.$add ? "24px" : "18px")};
  height: 22px;
  margin-left: ${(props) => (props.$first ? "auto" : "0")};
  font-size: 14px;
`;

// ---------- Status bar ----------

const StatusBar = styled.footer`
  display: flex;
  align-items: center;
  flex: none;
  height: 23px;
  padding-left: 33px;
  background: #2b579a;
  color: #fff;
  white-space: nowrap;
`;

const Readout = styled.span`
  display: flex;
  flex: none;
  width: ${(props) => props.$width}px;
`;

const ReadoutAxis = styled.span`
  width: ${(props) => (props.$first ? "24px" : "22px")};
`;

const StatusMenu = styled.button`
  display: flex;
  align-items: center;
  flex: none;
  gap: 8px;
  margin-right: ${(props) => (props.$end ? "15px" : "8px")};

  > svg {
    color: #8296b0;
  }
`;

const ShadeButtons = styled.div`
  display: flex;
  margin-left: auto;
  padding-right: 3px;
`;

const ShadeButton = styled.button`
  display: grid;
  place-items: center;
  width: 28px;
  height: 21px;
  background: ${(props) => (props.$active ? "#0a5fc8" : "transparent")};
`;

// ---------- Data ----------

const TABS = [
  "主页", "线框", "曲面", "实体", "模型准备", "网格",
  "标注", "转换", "浮雕", "机床", "视图",
];

const ANALYZE = [
  ["anEntity", "图素分析"],
  ["anDistance", "距离分析", true],
  ["anArea", "刀路分析"],
  ["anDynamic", "动态分析", true],
  ["anAngle", "角度分析", true],
  ["anChain", "串连分析", true],
  ["anSolid", "实体检查", true],
  ["anAdd", "面积体积", true],
  ["anSum", "统计"],
];

const TOOLS_TOP = [
  ["selAll"], ["selNone"], null, ["regenAll"], ["regenBad"], ["transformOp", true], null,
  ["backplot"], ["verify", true], ["simulate"], ["g1"], ["highfeed"], null, ["wand"], null, ["help"],
];

const TOOLS_BOTTOM = [
  ["lock"], ["waves"], ["ghost"], null, ["down"], ["up"], ["insertArrow"], ["scroll"], null,
  ["pickPath"], ["overlap"], ["display", true, true], null, ["machine"], ["editTool"],
];

const MASKS_LEFT = ["qmPicker", "qmColors", "qmLayers", "qmGear", "qmBlank"];
const MASKS_RIGHT = [
  "qmPlus", "qmLine", "qmCircle", "qmCurve", "qmWire", "qmDim",
  "qmSurface", "qmMesh", "qmSolid", "qmResult", "qmGroup",
];

const SHADES = ["wireSphere", "dimSphere", "edgeSphere", "litSphere", "softSphere", "halfSphere"];

// ---------- Sections ----------

const Header = () => (
  <TitleBar>
    <QuickAccess>
      <QuickButton aria-label="新建"><Icon name="newFile" /></QuickButton>
      <QuickButton aria-label="保存"><Icon name="save" /></QuickButton>
      <QuickButton aria-label="打开"><Icon name="open" /></QuickButton>
      <QuickButton $narrow aria-label="最近文件"><Chevron /></QuickButton>
      <QuickButton aria-label="打印"><Icon name="print" /></QuickButton>
      <QuickButton aria-label="另存为"><Icon name="saveAs" /></QuickButton>
      <QuickButton aria-label="打包"><Icon name="zip" /></QuickButton>
      <QuickDivider />
      <QuickButton aria-label="撤销"><Icon name="undo" /></QuickButton>
      <QuickButton aria-label="重做"><Icon name="redo" /></QuickButton>
      <QuickButton $narrow aria-label="自定义">
        <Svg width="6" height="6" viewBox="0 0 6 6">
          <path d="M0 0h6v1H0zM0 2.500h6L3 6z" fill="#666" />
        </Svg>
      </QuickButton>
    </QuickAccess>
    <AppTitle>Mastercam 设计 2024</AppTitle>
    <WindowButtons>
      <WindowButton aria-label="最小化">
        <Svg width="10" height="10" viewBox="0 0 10 10"><path d="M2 7h6v2H2z" fill="#666" /></Svg>
      </WindowButton>
      <WindowButton aria-label="最大化">
        <Svg width="10" height="10" viewBox="0 0 10 10">
          <path d="M1 1.500h8v7H1z" fill="none" stroke="#666" /><path d="M.5 1h9v1h-9z" fill="#666" />
        </Svg>
      </WindowButton>
      <WindowButton aria-label="关闭">
        <Svg width="10" height="10" viewBox="0 0 10 10"><Cross x={2} y={2} s={6} w={1.500} color="#666" /></Svg>
      </WindowButton>
    </WindowButtons>
  </TitleBar>
);

const Tabs = () => {
  const [active, setActive] = useState("主页");
  return (
    <TabBar>
      <FileTab>文件</FileTab>
      {TABS.map((name) => (
        <Tab key={name} $active={name === active} onClick={() => setActive(name)}>
          <TabLabel $long={name.length > 3}>{name}</TabLabel>
        </Tab>
      ))}
      <TabTools>
        <Combo label="工具栏" width={100} tall options={["标准"]} />
        <AccountLink href="#account">myMastercam</AccountLink>
        <ToolButton aria-label="反馈"><Icon name="comment" /></ToolButton>
        <ToolButton aria-label="帮助"><Icon name="help" /></ToolButton>
        <ToolButton $narrow aria-label="折叠功能区"><Chevron up /></ToolButton>
      </TabTools>
    </TabBar>
  );
};

const Ribbon = () => (
  <RibbonBar>
    <Group name="剪贴板" width={76} inset={11}>
      <BigButton>
        <Icon name="paste" size={32} />
        粘贴
      </BigButton>
      <SmallGrid>
        <Drop icon="cut" label="剪切" />
        <Drop icon="copy" label="复制" />
        <Drop icon="camera" label="截图" />
      </SmallGrid>
    </Group>

    <Group name="属性" width={258} inset={7} launcher>
      <FieldRows>
        <FieldRow>
          <Combo label="点型" width={37}><Icon name="pointStyle" /></Combo>
          <Combo label="线型" width={57}>
            <Svg width="38" height="2"><path d="M0 0h38v2H0z" fill="#111" /></Svg>
          </Combo>
          <Combo label="线宽" width={56}>
            <Svg width="38" height="1"><path d="M0 0h38v1H0z" fill="#111" /></Svg>
          </Combo>
          <DimToggle>3D</DimToggle>
        </FieldRow>
        <FieldRow $gap={7} $inset={4}>
          <Drop icon="lineColor" label="线框颜色" menu />
          <Drop icon="solidColor" label="实体颜色" menu />
          <Drop icon="surfaceColor" label="曲面颜色" menu />
          <Drop icon="wireColor" label="网格颜色" menu />
          <Drop icon="globe" label="材质" menu />
          <Drop icon="setAll" label="设置全部" />
          <Drop icon="setFrom" label="依照图形设置" />
          <Drop icon="lineTypes" label="清除颜色" />
        </FieldRow>
      </FieldRows>
    </Group>

    <Group name="规划" width={110} inset={10}>
      <FieldRows>
        <FieldRow $gap={4}>
          <FieldLabel>Z</FieldLabel>
          <Combo label="Z 深度" width={74} options={["0.0"]} />
        </FieldRow>
        <FieldRow $gap={4}>
          <Icon name="levels" />
          <Combo label="层别" width={74} options={["1"]} />
        </FieldRow>
      </FieldRows>
    </Group>

    <Group name="删除" width={97} inset={8}>
      <BigButton>
        <Icon name="bigDelete" size={32} />
        删除图素
      </BigButton>
      <SmallGrid>
        <Drop icon="deleteLink" label="非关联图形" />
        <Drop icon="deleteDup" label="重复图形" menu />
        <Drop icon="undelete" label="恢复图素" />
      </SmallGrid>
    </Group>

    <Group name="显示" width={125} inset={8} launcher>
      <BigButton>
        <Icon name="hideShow" size={32} />
        隐藏/取消隐藏
        <Chevron />
      </BigButton>
      <SmallGrid>
        <Drop icon="noPoints" label="消隐" />
        <Drop icon="endpoints" label="显示端点" />
        <Drop icon="hideBox" label="恢复消隐" menu />
      </SmallGrid>
    </Group>

    <Group name="分析" width={110} inset={9}>
      <SmallGrid $wide>
        {ANALYZE.map(([icon, label, menu]) => (
          <Drop key={icon} icon={icon} label={label} menu={menu} />
        ))}
      </SmallGrid>
    </Group>

    <Group name="加载项" width={67} inset={20} launcher>
      <SmallGrid>
        <Drop icon="gears" label="运行加载项" menu />
        <Drop icon="script" label="脚本" />
        <Drop icon="search" label="命令查找" />
      </SmallGrid>
    </Group>
  </RibbonBar>
);

const Toolbar = ({ items }) => (
  <PanelToolbar>
    {items.map((item, index) =>
      item ? (
        <PanelTool key={index} aria-label={item[0]} $menu={item[1]} $framed={item[2]}>
          <Icon name={item[0]} />
          {item[1] && <Caret />}
        </PanelTool>
      ) : (
        <PanelDivider key={index} />
      )
    )}
  </PanelToolbar>
);

const ToolpathPanel = () => (
  <Panel>
    <PanelHeader>
      <PanelTitle>刀路</PanelTitle>
      <PanelButton aria-label="选项"><Caret wide color="#555" /></PanelButton>
      <PanelButton aria-label="固定">
        <Svg width="8" height="10" viewBox="0 0 8 10">
          <path d="M2.500 6V.5h4V6M5.500 1v5M0 6.500h8M4.500 7v3" fill="none" stroke="#555" />
        </Svg>
      </PanelButton>
      <PanelButton aria-label="关闭面板">
        <Svg width="10" height="10" viewBox="0 0 10 10"><Cross x={2} y={2} s={6} w={1.500} color="#555" /></Svg>
      </PanelButton>
    </PanelHeader>
    <Toolbar items={TOOLS_TOP} />
    <Toolbar items={TOOLS_BOTTOM} />
    <OperationsTree />
    <PanelTabs>
      <PanelTab $active>刀路</PanelTab>
      <PanelTab>实体</PanelTab>
      <PanelTab>平面</PanelTab>
      <PanelTab>层别</PanelTab>
      <PanelTab>最近使用功能</PanelTab>
    </PanelTabs>
  </Panel>
);

const SelectTool = ({ name, ...rest }) => (
  <SelectionTool aria-label={name} {...rest}>
    {name ? <Icon name={name} /> : <Caret color="#444" />}
  </SelectionTool>
);

const Selection = () => (
  <SelectionBar>
    <SelectTool name="unlock" $dim />
    <SelectTool name="boxCursor" />
    <SelectionLabel>光标</SelectionLabel>
    <SelectTool $caret />
    <SelectTool name="xyz" />
    <SelectTool name="plusGear" />
    <SelectionDivider />
    <SelectTool name="cursor" $dim />
    <SelectTool name="cubeCheck" $dim />
    <SelectTool name="cubeEdge" $dim />
    <SelectTool name="cubeFace" $dim />
    <SelectTool name="cubeBody" $dim />
    <SelectTool name="cubeColor" />
    <SelectTool name="boxCursor" />
    <SelectTool $caret />
    <SelectTool name="region" />
    <SelectTool $caret />
    <SelectTool name="target" $dim $on />
    <SelectTool name="validate" />
    <SelectTool name="cycle" $dim />
    <SelectTool name="undoSelect" $dim />
  </SelectionBar>
);

const OrientationCube = () => (
  <Svg width="95" height="92" viewBox="405 500 95 92">
    <path d="M424 523h52v52h-52z" fill="#c6c6c6" />
    <g fill="#9b9b9b">
      <path d="M437 523h26v7h-26zM437 568h26v7h-26zM424 536h7v26h-7zM469 536h7v26h-7z" />
      <path d="M424 523h11v6l-5 5h-6zM476 523h-11v6l5 5h6zM424 575h11v-6l-5-5h-6zM476 575h-11v-6l5-5h6z" />
    </g>
    <text x="450" y="554" fontSize="11" fontWeight="500" textAnchor="middle" fill="#000" fontFamily="Noto Sans CJK SC">
      俯视图
    </text>
    <path d="M419.500 521h3v57h-3zM418 523l3-9 3 9z" fill="#009300" />
    <path d="M421 575.500h56v3h-56zM476 574l9 3-9 3z" fill="#d40000" />
    <text x="421" y="512" fontSize="12" fontWeight="700" textAnchor="middle" fill="#009300" fontFamily="DejaVu Sans">
      Y
    </text>
    <text x="491" y="582" fontSize="12" fontWeight="700" textAnchor="middle" fill="#d40000" fontFamily="DejaVu Sans">
      X
    </text>
  </Svg>
);

const Graphics = () => (
  <Viewport>
    <Selection />
    <ScaleRuler>28.030 毫米</ScaleRuler>
    <QuickMasks>
      <MaskColumn>
        {MASKS_LEFT.map((name) => (
          <MaskButton key={name} aria-label={name} $split>
            <Icon name={name} />
          </MaskButton>
        ))}
      </MaskColumn>
      <MaskColumn>
        {MASKS_RIGHT.map((name, index) => (
          <MaskButton key={name} aria-label={name} $split={index < 9} $faint={index > 4}>
            <Icon name={name} />
          </MaskButton>
        ))}
      </MaskColumn>
    </QuickMasks>
    <Gnomon>
      <GnomonRow $low>
        <SpinButton $tall aria-label="上下旋转">
          <Svg width="16" height="46" viewBox="0 0 16 46">
            <path d="M0 23h16" stroke="#fff" />
            <path d="M7 11h2v10H7zM4.500 12L8 5l3.500 7zM7 25h2v10H7zM4.500 34L8 41l3.500-7z" fill={BLUE} />
          </Svg>
        </SpinButton>
        <OrientationCube />
      </GnomonRow>
      <GnomonRow>
        <SpinButton aria-label="旋转">
          <Svg width="16" height="16" viewBox="0 0 16 16">
            <path d="M3 9c-1-4 4-6 7-5M13 7c1 4-4 6-7 5" fill="none" stroke={BLUE} strokeWidth="1.600" />
            <path d="M9 1l4 3-4 3zM7 9l-4 3 4 3z" fill={BLUE} />
          </Svg>
        </SpinButton>
        <SpinButton $wide aria-label="左右旋转">
          <Svg width="46" height="16" viewBox="0 0 46 16">
            <path d="M11 7h10v2H11zM12 4.500L5 8l7 3.500zM25 7h10v2H25zM34 4.500L41 8l-7 3.500z" fill={BLUE} />
          </Svg>
        </SpinButton>
        <ViewName>俯视图</ViewName>
      </GnomonRow>
    </Gnomon>
  </Viewport>
);

const SheetTabs = () => (
  <>
    <SheetRule />
    <SheetBar>
      <SheetTab>视图单-1</SheetTab>
      <SheetButton $add aria-label="新建视图单">+</SheetButton>
      <SheetButton $first aria-label="上一个">
        <Svg width="6" height="8" viewBox="0 0 6 8"><path d="M5.500.5v7L1 4z" fill="none" stroke="#777" /></Svg>
      </SheetButton>
      <SheetButton aria-label="下一个">
        <Svg width="6" height="8" viewBox="0 0 6 8"><path d="M.5.500v7L5 4z" fill="none" stroke="#777" /></Svg>
      </SheetButton>
    </SheetBar>
  </>
);

const Footer = () => (
  <StatusBar>
    <Readout $width={107}><ReadoutAxis $first>X:</ReadoutAxis>32.43263</Readout>
    <Readout $width={101}><ReadoutAxis>Y:</ReadoutAxis>66.24710</Readout>
    <Readout $width={74}><ReadoutAxis>Z:</ReadoutAxis>0.00000</Readout>
    <StatusMenu aria-label="Z 深度"><Chevron /></StatusMenu>
    <StatusMenu $end>3D</StatusMenu>
    <StatusMenu>绘图平面: 俯视图<Chevron /></StatusMenu>
    <StatusMenu>刀具平面: 俯视图<Chevron /></StatusMenu>
    <StatusMenu>WCS: 俯视图<Chevron /></StatusMenu>
    <ShadeButtons>
      {SHADES.map((name) => (
        <ShadeButton key={name} aria-label={name} $active={name === "litSphere"}>
          <Icon name={name} />
        </ShadeButton>
      ))}
    </ShadeButtons>
    <Svg width="16" height="16" viewBox="0 0 16 16">
      <path
        d="M11 4h2v2h-2zM11 8h2v2h-2zM7 8h2v2H7zM11 12h2v2h-2zM7 12h2v2H7zM3 12h2v2H3z"
        fill="#b9c8e0"
      />
    </Svg>
  </StatusBar>
);

const App = () => (
  <Window>
    <GlobalStyle />
    <Header />
    <Tabs />
    <Ribbon />
    <WorkArea>
      <ToolpathPanel />
      <Splitter />
      <ViewColumn>
        <Graphics />
        <SheetTabs />
      </ViewColumn>
    </WorkArea>
    <Footer />
  </Window>
);

export default App;
